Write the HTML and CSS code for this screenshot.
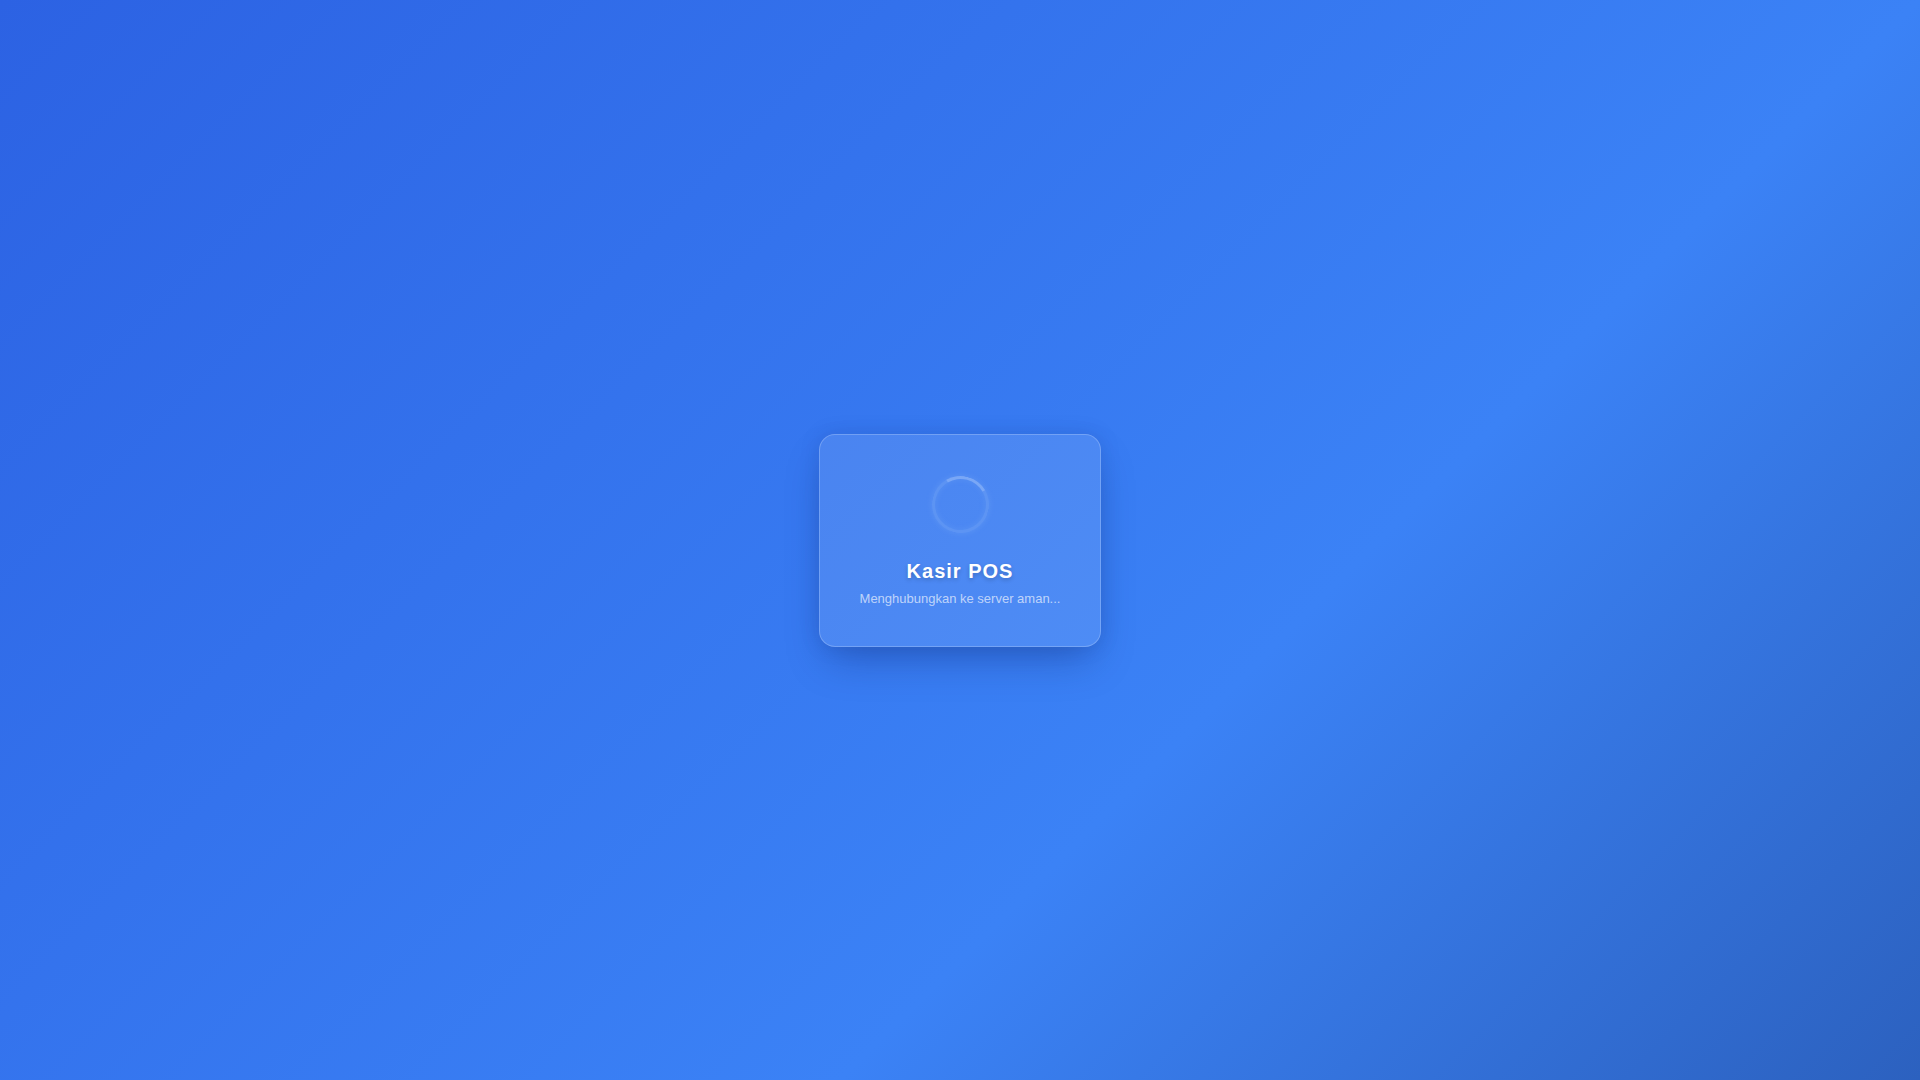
FILE: index.html
```html
<!DOCTYPE html>
<html lang="id">
<head>
<meta charset="utf-8">
<title>Kasir POS</title>
<link rel="stylesheet" href="styles.css">
</head>
<body>
<main class="screen">
  <section class="card">
    <div class="spinner"></div>
    <h1 class="title">Kasir POS</h1>
    <p class="subtitle">Menghubungkan ke server aman...</p>
  </section>
</main>
</body>
</html>
```

FILE: styles.css
```css
html, body {
  margin: 0;
  padding: 0;
  height: 100%;
}
body {
  font-family: "Liberation Sans", Arial, sans-serif;
  background: linear-gradient(135deg, #2c62e3 0%, #3b82f6 64%, #2c61bf 100%);
  overflow: hidden;
}
.screen {
  height: 100vh;
  display: flex;
  align-items: center;
  justify-content: center;
}
.card {
  display: flex;
  flex-direction: column;
  align-items: center;
  padding: 41px 40px 37px;
  border-radius: 16px;
  background: rgba(255, 255, 255, 0.1);
  border: 1px solid rgba(255, 255, 255, 0.22);
  box-shadow: 0 20px 40px -10px rgba(20, 50, 130, 0.45), 0 0 20px rgba(20, 50, 130, 0.15);
}
.spinner {
  width: 51px;
  height: 51px;
  border-radius: 50%;
  border: 3px solid rgba(200, 225, 255, 0.14);
  border-top-color: rgba(220, 235, 255, 0.32);
  transform: rotate(15deg);
  box-shadow: 0 0 6px rgba(160, 200, 255, 0.2), inset 0 0 6px rgba(160, 200, 255, 0.16);
}
.title {
  margin: 24px 0 0;
  font-size: 20px;
  line-height: 28px;
  font-weight: 700;
  letter-spacing: 1px;
  color: #ffffff;
  text-shadow: 0 2px 4px rgba(0, 0, 0, 0.2);
}
.subtitle {
  margin: 4px 0 0;
  font-size: 13px;
  line-height: 20px;
  color: rgba(255, 255, 255, 0.65);
}
```
